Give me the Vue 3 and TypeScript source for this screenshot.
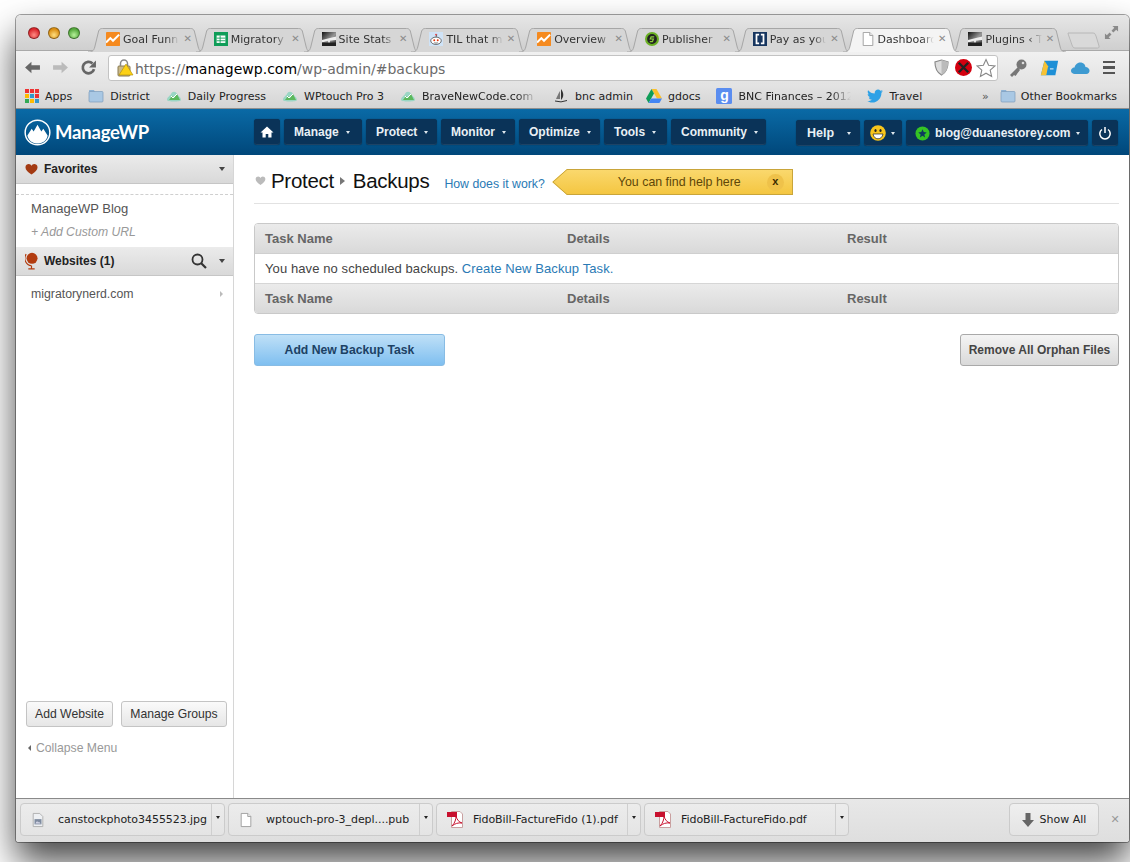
<script setup lang="ts">
const icons: Record<string, string> = {
  funnel: '<rect width="16" height="16" rx="1" fill="#f58a1f"/><path d="M0 12 L5 7 L8 10 L15 3" fill="none" stroke="#fff" stroke-width="2.4"/>',
  sheet: '<rect width="16" height="16" fill="#0f9d58"/><path d="M3 4h10v8.5H3z" fill="#fff"/><path d="M3 7h10M3 10h10M7 4v8.5" stroke="#0f9d58" stroke-width="1"/>',
  wp: '<defs><linearGradient id="sg" x1="0" y1="0" x2="1" y2="1"><stop offset="0" stop-color="#111"/><stop offset=".55" stop-color="#999"/><stop offset="1" stop-color="#222"/></linearGradient></defs><rect width="16" height="16" fill="url(#sg)"/><path d="M0 9 L16 5 V9 L9 10 V16 H7 V10 L0 12z" fill="#eee"/><rect y="12" width="16" height="4" fill="#222"/>',
  reddit: '<rect width="16" height="16" fill="#cfe3f7"/><ellipse cx="8" cy="10" rx="6" ry="4.2" fill="#fff" stroke="#333" stroke-width=".8"/><circle cx="8" cy="3" r="1" fill="#e33"/><path d="M8 6 L9 3" stroke="#333" stroke-width=".7"/><circle cx="6" cy="9.5" r="1.1" fill="#e4350c"/><circle cx="10" cy="9.5" r="1.1" fill="#e4350c"/><path d="M6 12.2q2 1 4 0" stroke="#333" stroke-width=".7" fill="none"/>',
  pub: '<circle cx="8" cy="8" r="8" fill="#6ab023"/><circle cx="8" cy="8" r="5.6" fill="#222"/><path d="M10.5 5.5H7L6 8h3.6L8.5 11H5.5" fill="none" stroke="#8ed13a" stroke-width="1.4"/>',
  pay: '<rect width="16" height="16" fill="#16355f"/><path d="M7 3H4v10h3M9 3h3v10H9" fill="none" stroke="#fff" stroke-width="2"/>',
  doc: '<path d="M2.5 .5H10L13.5 4V15.5H2.5z" fill="#fff" stroke="#999"/><path d="M10 .5V4H13.5" fill="#eee" stroke="#999"/>',
  jpg: '<path d="M2.5 .5H10L13.5 4V15.5H2.5z" fill="#eef0f3" stroke="#aaa"/><rect x="4" y="7" width="8" height="6" fill="#7f8ba0"/><path d="M5 12l2-3 1 2 1-1 2 2z" fill="#dde"/>',
  pdf: '<path d="M4.5 1.5H13L15.5 4V17.5H4.5z" fill="#fff" stroke="#c9a0a0"/><rect x="0" y="2" width="10" height="5" fill="#c8102e"/><path d="M5 16c3-3 4-7 4-10 1 4 3 6 6 7-4-.5-7 .5-10 3z" fill="none" stroke="#c8102e" stroke-width="1"/>',
  cloud: '<path d="M1 12 C1 9 4 8 5 6 C6 3 10 3 11 6 C12 8 15 9 15 12 C15 14 1 14 1 12z" fill="#9ad6c4"/><path d="M3 12 L6 8 L8 10 L11 6 L14 12z" fill="#5cb85c"/><path d="M5 8l2 2 4-4" stroke="#fff" stroke-width="1" fill="none"/>',
  folder: '<path d="M1 4 V2.5 Q1 2 1.5 2 H6 L7 4z" fill="#8fb3d4"/><rect x="1" y="3.5" width="14" height="10.5" rx="1" fill="#a9c8e4" stroke="#7c9cbb" stroke-width=".7"/>',
  sail: '<path d="M8 1 C11 5 11 9 8 12z" fill="#333"/><path d="M7 3 C5 6 4 9 3 11 L7 11z" fill="#777"/><path d="M2 13 Q8 15 14 12.5" stroke="#333" fill="none"/>',
  gdocs: '<path d="M5.5 1H10.5L16 10.5H11z" fill="#fbc02d"/><path d="M5.5 1L0 10.5L2.6 15L8 5.5z" fill="#0f9d58"/><path d="M2.6 15H13.4L16 10.5H5.2z" fill="#4285f4"/>',
  g: '<rect width="16" height="16" rx="1.5" fill="#5a8df0"/>',
  bird: '<path d="M16 3.2c-.6.3-1.2.4-1.9.5.7-.4 1.2-1 1.4-1.8-.6.4-1.3.6-2.1.8C12.800 2 12 1.600 11 1.600c-1.800 0-3.300 1.500-3.300 3.300 0 .3 0 .5.1.7C5.100 5.500 2.700 4.200 1.100 2.200.8 2.700.7 3.200.7 3.800c0 1.100.6 2.100 1.500 2.700-.5 0-1-.2-1.500-.4 0 1.600 1.100 2.900 2.600 3.200-.5.1-1 .2-1.500.1.4 1.300 1.600 2.300 3.100 2.300C3.700 12.600 2 13.300 0 13.100c1.500.9 3.200 1.500 5 1.500 6 0 9.400-5 9.400-9.400v-.4c.6-.5 1.200-1 1.600-1.600z" fill="#2da1e6"/>',
}

const tabs = [
  { title: 'Goal Funn', icon: 'funnel' },
  { title: 'Migratory', icon: 'sheet' },
  { title: 'Site Stats', icon: 'wp' },
  { title: 'TIL that m', icon: 'reddit' },
  { title: 'Overview', icon: 'funnel' },
  { title: 'Publisher', icon: 'pub' },
  { title: 'Pay as you', icon: 'pay' },
  { title: 'Dashboard', icon: 'doc', active: true },
  { title: 'Plugins ‹ T', icon: 'wp' },
]
const marks = [
  { title: 'District', icon: 'folder' },
  { title: 'Daily Progress', icon: 'cloud' },
  { title: 'WPtouch Pro 3', icon: 'cloud' },
  { title: 'BraveNewCode.com', icon: 'cloud', fade: true },
  { title: 'bnc admin', icon: 'sail' },
  { title: 'gdocs', icon: 'gdocs' },
  { title: 'BNC Finances – 2012', icon: 'g', fade: true, letter: true },
  { title: 'Travel', icon: 'bird' },
]
const menu = [
  { label: 'Manage', width: 78 },
  { label: 'Protect', width: 71 },
  { label: 'Monitor', width: 74 },
  { label: 'Optimize', width: 81 },
  { label: 'Tools', width: 63 },
  { label: 'Community', width: 95 },
]
const downloads = [
  { name: 'canstockphoto3455523.jpg', icon: 'jpg' },
  { name: 'wptouch-pro-3_depl....pub', icon: 'doc' },
  { name: 'FidoBill-FactureFido (1).pdf', icon: 'pdf' },
  { name: 'FidoBill-FactureFido.pdf', icon: 'pdf' },
]
</script>

<template>
  <div class="page">
    <div class="window">
      <div class="strip">
        <div class="lights"><i class="red"></i><i class="amber"></i><i class="green"></i></div>
        <div class="tabs">
          <div v-for="t in tabs" :key="t.title + t.icon" class="tab" :class="{ active: t.active }">
            <svg class="tab-bg" viewBox="0 0 120 24" preserveAspectRatio="none">
              <path d="M0 24 C4 24 6 23 7 19 L11 3 C12 1 13 .5 15 .5 H106 C108 .5 109 1 110 3 L114 19 C115 23 117 24 120 24" vector-effect="non-scaling-stroke" />
            </svg>
            <svg class="fav" viewBox="0 0 16 16" v-html="icons[t.icon]"></svg>
            <span class="tab-title">{{ t.title }}</span>
            <span class="tab-x">✕</span>
          </div>
          <svg class="newtab" viewBox="0 0 34 17"><path d="M1 1 H26 C28 1 28 2 29 4 L32 14 C32.500 16 31 16 30 16 H8 C6 16 6 15 5 13 L1.500 3 C1 1.500 1 1 1 1z" /></svg>
        </div>
        <svg class="expand" viewBox="0 0 16 16"><path d="M9 1h6v6l-2-2-3 3-2-2 3-3zM7 15H1V9l2 2 3-3 2 2-3 3z" fill="#8a8a8a"/></svg>
      </div>

      <div class="toolbar">
        <svg class="tool" viewBox="0 0 16 16"><path d="M1 8 L7 2.500 V5.800 H15 V10.200 H7 V13.500z" fill="#666"/></svg>
        <svg class="tool" viewBox="0 0 16 16"><path d="M15 8 L9 2.500 V5.800 H1 V10.200 H9 V13.500z" fill="#bbb"/></svg>
        <svg class="tool" viewBox="0 0 16 16"><path d="M13.200 9.500 A5.400 5.400 0 1 1 11.800 4.200" fill="none" stroke="#666" stroke-width="2.600"/><path d="M15 1.500V8H8.500z" fill="#666"/></svg>
        <div class="omni">
          <svg class="lock" viewBox="0 0 18 18"><rect x="2" y="7" width="12" height="10" rx="1" fill="#c9b98a" stroke="#8a7a50"/><path d="M4.500 7V4.500a3.500 3.500 0 0 1 7 0V7" fill="none" stroke="#888" stroke-width="1.500"/><path d="M10 5 L17 16 H3z" fill="#fcd116" stroke="#b08d00" stroke-width=".6"/></svg>
          <span class="url"><span class="dim">https://</span><b>managewp.com</b><span class="dim">/wp-admin/#backups</span></span>
          <svg class="om-i shield" viewBox="0 0 16 18"><path d="M8 1 L15 3 C15 10 13 14 8 17 C3 14 1 10 1 3z" fill="#ddd" stroke="#888" stroke-width="1.200"/><path d="M8 1 L15 3 C15 10 13 14 8 17z" fill="#bbb"/></svg>
          <svg class="om-i blocker" viewBox="0 0 18 18"><circle cx="9" cy="9" r="9" fill="#d4000f"/><path d="M4 4 L14 14 M14 4 L4 14" stroke="#222" stroke-width="2.500"/></svg>
          <svg class="om-i star" viewBox="0 0 20 20"><path d="M10 1.500 L12.600 7.300 L19 8 L14.200 12.200 L15.600 18.500 L10 15.200 L4.400 18.500 L5.800 12.200 L1 8 L7.400 7.300z" fill="#fff" stroke="#888" stroke-width="1.100"/></svg>
        </div>
        <svg class="ext key" viewBox="0 0 20 20"><circle cx="13.500" cy="6.500" r="5" fill="#777"/><path d="M10 9 L2 17 L4 19 L6 17 L7.500 18 L12 12z" fill="#777"/><circle cx="15" cy="5" r="1.300" fill="#ddd"/></svg>
        <svg class="ext" viewBox="0 0 22 20"><path d="M6 2 H21 L18 18 H2z" fill="#1d8fd6"/><path d="M6 2 L2 18 H8 L10 8z" fill="#f7c234"/><path d="M12 11h4" stroke="#fff"/></svg>
        <svg class="ext" viewBox="0 0 22 16"><path d="M5 14.500 C1.500 14.500 .5 11.500 1.500 9.500 C2.500 7.800 4 7.500 5 7.500 C6 3 9.500 1.500 12.500 2 C15.500 2.500 17 5 17 7 C19.500 7 21.500 9 21.500 11 C21.500 13 20 14.500 18 14.500z" fill="#3d9ad1"/></svg>
        <div class="burger"><i></i><i></i><i></i></div>
      </div>

      <div class="bookmarks">
        <div class="mark apps">
          <span class="dots"><i v-for="(c, n) in ['#e33','#e33','#e33','#fb0','#39c','#e33','#3a5','#fb0','#39c']" :key="n" :style="{ background: c }"></i></span>
          Apps
        </div>
        <div v-for="m in marks" :key="m.title" class="mark">
          <span v-if="m.letter" class="g-wrap">
            <svg viewBox="0 0 16 16" v-html="icons[m.icon]"></svg><em>g</em>
          </span>
          <svg v-else viewBox="0 0 16 16" v-html="icons[m.icon]"></svg>
          <span :class="{ fade: m.fade }">{{ m.title }}</span>
        </div>
        <div class="mark more">»</div>
        <div class="mark other"><svg viewBox="0 0 16 16" v-html="icons.folder"></svg>Other Bookmarks</div>
      </div>

      <div class="nav">
        <div class="logo">
          <svg viewBox="0 0 28 28"><circle cx="14" cy="14" r="12.800" fill="none" stroke="#fff" stroke-width="1.500"/><path d="M3.500 17 L8 10 L10 13 L14 6 L18 13 L20 10 L24.500 17 C24 22 19 25.500 14 25.500 C9 25.500 4.500 22 3.500 17z" fill="#fff"/></svg>
          <span>ManageWP</span>
        </div>
        <div class="menu">
          <div class="nb home"><svg viewBox="0 0 14 14"><path d="M7 1.500 L13.500 7.500 H11.500 V12.500 H8.300 V9 H5.700 V12.500 H2.500 V7.500 H.5z" fill="#fff"/></svg></div>
          <div v-for="m in menu" :key="m.label" class="nb" :style="{ width: m.width + 'px' }">{{ m.label }}<i class="caret"></i></div>
        </div>
        <div class="menu right">
          <div class="nb help">Help<i class="caret"></i></div>
          <div class="nb smile">
            <svg viewBox="0 0 16 16"><circle cx="8" cy="8" r="7.800" fill="#f8c51c"/><ellipse cx="5.500" cy="5.500" rx="1.100" ry="1.600" fill="#222"/><ellipse cx="10.500" cy="5.500" rx="1.100" ry="1.600" fill="#222"/><path d="M3 9 H13 C12.500 12 10.500 13.800 8 13.800 C5.500 13.800 3.500 12 3 9z" fill="#fff" stroke="#222" stroke-width=".7"/></svg>
            <i class="caret"></i>
          </div>
          <div class="nb user">
            <svg viewBox="0 0 16 16"><circle cx="8" cy="8" r="7.500" fill="#35c424"/><path d="M8 3.500 L9.300 6.500 L12.500 6.800 L10 9 L10.800 12.200 L8 10.500 L5.200 12.200 L6 9 L3.500 6.800 L6.700 6.500z" fill="#0d3b5e"/></svg>
            blog@duanestorey.com<i class="caret"></i>
          </div>
          <div class="nb power"><svg viewBox="0 0 14 14"><path d="M4 3.500 A5.200 5.200 0 1 0 10 3.500" fill="none" stroke="#fff" stroke-width="1.500"/><path d="M7 1 V7" stroke="#fff" stroke-width="1.500"/></svg></div>
        </div>
      </div>

      <div class="body">
        <aside class="side">
          <div class="side-head">
            <svg viewBox="0 0 14 12"><path d="M7 12 C3 9 .5 7 .5 4 C.5 1.500 2.500 .5 4 .5 C5.500 .5 6.500 1.500 7 2.500 C7.500 1.500 8.500 .5 10 .5 C11.500 .5 13.500 1.500 13.500 4 C13.500 7 11 9 7 12z" fill="#a33a12"/></svg>
            <span class="grow">Favorites</span>
            <i class="down"></i>
          </div>
          <div class="favs">
            <div class="fav-link">ManageWP Blog</div>
            <div class="add-url">+ Add Custom URL</div>
          </div>
          <div class="side-head sites">
            <svg viewBox="0 0 12 17"><circle cx="6.500" cy="6" r="5.200" fill="#b23c10"/><path d="M1 2 A7 7 0 0 0 6 13 M6 13 V15.500 M3 16 H9" fill="none" stroke="#b23c10" stroke-width="1.100"/></svg>
            <span class="grow">Websites (1)</span>
            <svg class="search" viewBox="0 0 16 16"><circle cx="6.500" cy="6.500" r="5" fill="none" stroke="#333" stroke-width="1.800"/><path d="M10 10 L15 15" stroke="#333" stroke-width="2.200"/></svg>
            <i class="down"></i>
          </div>
          <div class="site-row"><span>migratorynerd.com</span><i class="tri"></i></div>
          <div class="side-foot">
            <div class="side-btns"><button>Add Website</button><button>Manage Groups</button></div>
            <div class="collapse"><i class="back"></i>Collapse Menu</div>
          </div>
        </aside>

        <main class="main">
          <div class="title-row">
            <svg class="crumb-heart" viewBox="0 0 14 12"><path d="M7 12 C3 9 .5 7 .5 4 C.5 1.500 2.500 .5 4 .5 C5.500 .5 6.500 1.500 7 2.500 C7.500 1.500 8.500 .5 10 .5 C11.500 .5 13.500 1.500 13.500 4 C13.500 7 11 9 7 12z" fill="#bbb"/></svg>
            <h1>Protect<i class="crumb-tri"></i>Backups</h1>
            <a class="how">How does it work?</a>
            <div class="hint">
              <svg class="hint-point" viewBox="0 0 16 26">
                <defs><linearGradient id="hg" x1="0" y1="0" x2="0" y2="1"><stop offset="0" stop-color="#fad86d"/><stop offset="1" stop-color="#f4c641"/></linearGradient></defs>
                <path d="M16 0 H15 L0 13 L15 26 H16z" fill="url(#hg)"/>
                <path d="M16 .5 H15 L1 13 L15 25.500 H16" fill="none" stroke="#c9a53a"/>
              </svg>
              <div class="hint-body"><span>You can find help here</span><b>x</b></div>
            </div>
          </div>
          <div class="grid">
            <div class="g-row head"><span>Task Name</span><span>Details</span><span>Result</span></div>
            <div class="g-empty">You have no scheduled backups. <a>Create New Backup Task.</a></div>
            <div class="g-row head foot"><span>Task Name</span><span>Details</span><span>Result</span></div>
          </div>
          <div class="actions">
            <button class="primary">Add New Backup Task</button>
            <button class="orphan">Remove All Orphan Files</button>
          </div>
        </main>
      </div>

      <div class="dl">
        <div v-for="d in downloads" :key="d.name" class="dl-item">
          <div class="dl-main">
            <svg :class="d.icon === 'pdf' ? 'pdf' : ''" :viewBox="d.icon === 'pdf' ? '0 0 16 19' : '0 0 16 16'" v-html="icons[d.icon]"></svg>
            <span>{{ d.name }}</span>
          </div>
          <div class="dl-arrow"><i></i></div>
        </div>
        <div class="dl-space"></div>
        <div class="show-all">
          <svg viewBox="0 0 12 14"><path d="M3.500 0 H8.500 V7 H12 L6 14 L0 7 H3.500z" fill="#666"/></svg>
          Show All
        </div>
        <span class="dl-x">✕</span>
      </div>
    </div>
  </div>
</template>

<style>
html, body { margin: 0; background: #fff; }
</style>

<style scoped>
.page {
  width: 1130px;
  height: 862px;
  box-sizing: border-box;
  padding: 15px 1px 0 16px;
  overflow: hidden;
  background: #fff;
}
.window {
  height: 827px;
  display: flex;
  flex-direction: column;
  border-radius: 5px 5px 3px 3px;
  box-shadow: 0 20px 36px rgba(0, 0, 0, .72), 0 0 0 1px rgba(90, 90, 90, .55);
  background: #fff;
  font-family: "Liberation Sans", Arial, sans-serif;
}
.strip {
  height: 36px;
  flex: none;
  display: flex;
  align-items: flex-start;
  background: linear-gradient(#e6e6e6, #cfcfcf);
  border-radius: 5px 5px 0 0;
  border-bottom: 1px solid #a9a9a9;
  box-sizing: border-box;
}
.lights { display: flex; gap: 8px; padding: 12px 0 0 12px; width: 63px; flex: none; }
.lights i { width: 12px; height: 12px; border-radius: 50%; border: .5px solid rgba(0,0,0,.35); box-sizing: border-box; }
.red { background: radial-gradient(circle at 50% 70%, #ff8d85, #d8242a 70%); }
.amber { background: radial-gradient(circle at 50% 70%, #ffdf80, #d98c10 70%); }
.green { background: radial-gradient(circle at 50% 70%, #b7f29b, #52a63a 70%); }
.tabs { display: flex; align-items: flex-end; height: 36px; padding-left: 1px; }
.tab {
  position: relative;
  width: 107.800px;
  height: 24px;
  display: flex;
  align-items: center;
  box-sizing: border-box;
  padding: 0 8px 2px 14px;
  margin-bottom: -1px;
  font: 11px/1 "DejaVu Sans", sans-serif;
  color: #333;
}
.tab-bg { position: absolute; left: -4px; top: 0; width: 116px; height: 24px; fill: #d6d6d6; stroke: #a6a6a6; stroke-width: 1px; z-index: 0; }
.tab.active { z-index: 2; }
.tab.active .tab-bg { fill: #f4f4f4; }
.fav { width: 14px; height: 14px; flex: none; position: relative; margin-right: 3px; }
.tab-title {
  position: relative;
  flex: 1;
  overflow: hidden;
  white-space: nowrap;
  -webkit-mask-image: linear-gradient(to right, #000 78%, transparent 100%);
  mask-image: linear-gradient(to right, #000 78%, transparent 100%);
}
.tab-x { position: relative; color: #8b8b8b; font-size: 10px; margin-left: 4px; }
.newtab { width: 34px; height: 17px; margin: 0 0 2px 5px; fill: #d9d9d9; stroke: #aaa; stroke-width: .7; flex: none; }
.expand { width: 15px; height: 15px; margin: 10px 0 0 3px; flex: none; }
.toolbar {
  height: 33px;
  flex: none;
  display: flex;
  align-items: center;
  box-sizing: border-box;
  padding: 0 11px 0 8px;
  background: linear-gradient(#f1f1f1, #e3e3e3);
}
.tool { width: 17px; height: 17px; margin-right: 11px; flex: none; }
.omni {
  width: 890px;
  height: 26px;
  flex: none;
  display: flex;
  align-items: center;
  box-sizing: border-box;
  padding: 0 1px 0 7px;
  background: #fff;
  border: 1px solid #c3c3c3;
  border-radius: 3px;
}
.lock { width: 18px; height: 18px; margin-right: 1px; flex: none; }
.url { flex: 1; font: 14px/18px "DejaVu Sans", sans-serif; color: #111; white-space: nowrap; padding-top: 3px; }
.url b { font-weight: 400; color: #000; }
.dim { color: #6b6b6b; }
.om-i { flex: none; }
.shield { width: 15px; height: 17px; margin-right: 6px; }
.blocker { width: 17px; height: 17px; margin-right: 4px; }
.star { width: 20px; height: 20px; }
.ext { width: 20px; height: 20px; flex: none; margin-left: 11px; }
.key { margin-left: 10px; }
.burger { display: flex; flex-direction: column; gap: 3px; width: 12px; margin-left: 13px; flex: none; }
.burger i { height: 2.500px; background: #555; display: block; }

.bookmarks {
  height: 25px;
  flex: none;
  display: flex;
  align-items: center;
  box-sizing: border-box;
  padding: 0 12px 0 9px;
  background: linear-gradient(#e4e4e4, #d4d4d4);
  border-bottom: 1px solid #8f8f8f;
  font: 11px "DejaVu Sans", sans-serif;
  color: #222;
}
.mark { display: flex; align-items: center; gap: 6px; margin-right: 16px; white-space: nowrap; }
.mark svg { width: 16px; height: 16px; flex: none; }
.mark:nth-child(6) { margin-right: 13px; }
.apps { margin-right: 16px; }
.dots { display: grid; grid-template-columns: repeat(3, 4px); gap: 1px; width: 14px; }
.dots i { height: 4px; display: block; }
.fade {
  display: inline-block;
  overflow: hidden;
  -webkit-mask-image: linear-gradient(to right, #000 82%, transparent 100%);
  mask-image: linear-gradient(to right, #000 82%, transparent 100%);
}
.mark:nth-child(5) .fade { width: 115px; }
.mark:nth-child(8) .fade { width: 113px; }
.g-wrap { position: relative; width: 16px; height: 16px; display: block; }
.g-wrap em { position: absolute; inset: 0; color: #fff; font: 700 14px/14px "Liberation Sans", sans-serif; text-align: center; }
.more { margin: 0 11px 0 auto; font-size: 11px; color: #555; }
.other { margin-right: 0; gap: 5px; }

.nav {
  height: 46px;
  flex: none;
  display: flex;
  align-items: flex-start;
  box-sizing: border-box;
  padding: 10px 11px 0 8px;
  background: linear-gradient(#0a6aa6, #00477a);
}
.logo { width: 230px; display: flex; align-items: center; gap: 4px; height: 26px; flex: none; color: #fff; font: 700 18.500px "Lato", "Liberation Sans", sans-serif; letter-spacing: -.2px; }
.logo svg { width: 27px; height: 27px; flex: none; }
.menu { display: flex; gap: 4px; }
.right { margin-left: auto; padding-top: 1px; }
.nb {
  height: 26px;
  box-sizing: border-box;
  padding: 0 0 0 10px;
  display: flex;
  align-items: center;
  background: #0a3358;
  border-radius: 3px;
  box-shadow: inset 0 -1px 0 rgba(255,255,255,.08), 0 0 1px rgba(0,0,0,.5);
  color: #e9f0f5;
  font: 700 12px "Liberation Sans", sans-serif;
  white-space: nowrap;
}
.home { width: 26px; padding: 0; justify-content: center; }
.home svg { width: 14px; height: 14px; }
.caret { width: 0; height: 0; border: 2.500px solid transparent; border-top: 3px solid #dfe8ee; border-bottom: 0; margin-left: 7px; flex: none; }
.help { width: 64px; padding: 0 9px 0 11px; justify-content: space-between; font-size: 12.500px; }
.smile { width: 38px; padding: 0 0 0 6px; }
.smile svg { width: 16px; height: 16px; flex: none; }
.smile .caret { margin-left: 5px; }
.user { width: 182px; padding: 0 0 0 9px; gap: 5px; }
.user svg { width: 15px; height: 15px; flex: none; }
.user .caret { margin-left: 0; }
.power { width: 26px; padding: 0; justify-content: center; }
.power svg { width: 14px; height: 14px; }

.body { flex: 1; display: flex; min-height: 0; }
.side {
  width: 218px;
  flex: none;
  box-sizing: border-box;
  border-right: 1px solid #d6d6d6;
  display: flex;
  flex-direction: column;
  font-size: 12px;
  color: #555;
}
.side-head {
  height: 29px;
  flex: none;
  display: flex;
  align-items: center;
  box-sizing: border-box;
  padding: 0 8px 0 9px;
  gap: 6px;
  background: linear-gradient(#ebebeb, #d9d9d9);
  border-bottom: 1px solid #c6c6c6;
  color: #222;
  font-weight: 700;
}
.side-head > svg:first-child { width: 13px; height: 12px; flex: none; }
.sites > svg:first-child { width: 13px; height: 18px; }
.grow { flex: 1; }
.down { width: 0; height: 0; border: 3.500px solid transparent; border-top: 4px solid #444; border-bottom: 0; }
.search { width: 16px; height: 16px; margin-right: 6px; }
.favs { border-top: 1px dashed #cfcfcf; margin-top: 10px; padding: 5px 15px 6px; }
.fav-link { font-size: 13px; line-height: 18px; }
.add-url { font-size: 12.200px; font-style: italic; color: #999; line-height: 18px; margin-top: 5px; }
.site-row { display: flex; align-items: center; justify-content: space-between; padding: 9px 10px 0 15px; font-size: 12.300px; line-height: 18px; }
.tri { width: 0; height: 0; border: 3px solid transparent; border-left: 3px solid #bbb; border-right: 0; }
.side-foot { margin-top: auto; padding: 0 6px 42px 10px; }
.side-btns { display: flex; justify-content: space-between; }
.side-btns button {
  height: 26px;
  padding: 0;
  width: 87px;
  border: 1px solid #c4c4c4;
  border-radius: 3px;
  background: linear-gradient(#fafafa, #e6e6e6);
  font: 12.200px "Liberation Sans", sans-serif;
  color: #333;
}
.side-btns button:last-child { width: 106px; }
.collapse { margin-top: 13px; color: #999; font-size: 12.200px; display: flex; align-items: center; gap: 5px; line-height: 16px; padding-left: 2px; }
.back { width: 0; height: 0; border: 3px solid transparent; border-right: 3px solid #666; border-left: 0; }

.main { flex: 1; box-sizing: border-box; padding: 0 10px 0 20px; min-width: 0; }
.title-row { height: 49px; display: flex; align-items: center; border-bottom: 1px solid #e2e2e2; padding-top: 6px; box-sizing: border-box; }
.crumb-heart { width: 11px; height: 9px; margin: -4px 5px 0 1px; flex: none; }
h1 { margin: -2px 0 0; font: 400 20.500px "Liberation Sans", sans-serif; color: #111; display: flex; align-items: center; letter-spacing: -.3px; }
.crumb-tri { width: 0; height: 0; border: 4.500px solid transparent; border-left: 5px solid #777; border-right: 0; margin: 0 8px 0 6px; }
.how { font-size: 12.300px; color: #2a7ab5; margin: 3px 0 0 15px; }
.hint { display: flex; margin-left: 7px; height: 26px; }
.hint-point { width: 16px; height: 26px; display: block; flex: none; }
.hint-body {
  width: 225px;
  box-sizing: border-box;
  display: flex;
  align-items: center;
  justify-content: space-between;
  padding: 0 8px 0 50px;
  background: linear-gradient(#fad86d, #f4c641);
  border: 1px solid #c9a53a;
  border-left: 0;
  font: 12.400px "Liberation Sans", sans-serif;
  color: #5e4708;
}
.hint-body b { width: 17px; height: 17px; border-radius: 50%; background: #efc24a; color: #3a2a00; text-align: center; line-height: 15px; font-size: 11px; }
.grid { margin-top: 19px; border: 1px solid #c9c9c9; border-radius: 4px; overflow: hidden; }
.g-row {
  height: 30px;
  display: grid;
  grid-template-columns: 302px 280px 1fr;
  align-items: center;
  box-sizing: border-box;
  padding-left: 10px;
  background: linear-gradient(#ebebeb, #d9d9d9);
  color: #666;
  font-size: 13px;
  font-weight: 700;
  border-bottom: 1px solid #cfcfcf;
}
.foot { border-top: 1px solid #d6d6d6; border-bottom: 0; }
.g-empty { height: 29px; box-sizing: border-box; padding-left: 10px; display: flex; align-items: center; gap: 3.500px; font-size: 13px; letter-spacing: .1px; color: #444; background: #fff; }
.g-empty a { color: #2a7ab5; }
.actions { margin-top: 20px; display: flex; justify-content: space-between; }
.actions button { height: 32px; border-radius: 3px; font: 700 12px "Liberation Sans", sans-serif; padding: 0; }
.actions .primary { width: 191px; font-size: 12.200px; background: linear-gradient(#bfe0f7, #7fbff0); border: 1px solid #88bce4; color: #1c4164; }
.orphan { width: 159px; background: linear-gradient(#f4f4f4, #d9d9d9); border: 1px solid #a9a9a9; color: #444; }

.dl {
  height: 44px;
  flex: none;
  display: flex;
  align-items: center;
  box-sizing: border-box;
  padding: 0 7px 2px 4px;
  gap: 3px;
  background: linear-gradient(#e8e8e8, #dedede);
  border-top: 1px solid #8a8a8a;
  border-radius: 0 0 3px 3px;
  font: 11px "DejaVu Sans", sans-serif;
  color: #222;
}
.dl-item {
  width: 205px;
  height: 33px;
  display: flex;
  box-sizing: border-box;
  border: 1px solid #cbcbcb;
  border-radius: 4px;
  background: linear-gradient(#ececec, #e4e4e4);
}
.dl-main { flex: 1; display: flex; align-items: center; padding-left: 10px; white-space: nowrap; overflow: hidden; letter-spacing: -.05px; }
.dl-main svg { width: 14px; height: 16px; flex: none; margin-right: 13px; }
.dl-main svg.pdf { width: 16px; height: 19px; margin-right: 10px; }
.dl-arrow { width: 13px; flex: none; border-left: 1px solid #cfcfcf; display: flex; justify-content: center; padding-top: 12px; box-sizing: border-box; }
.dl-arrow i { display: block; width: 0; height: 0; border: 2.500px solid transparent; border-top: 3px solid #222; border-bottom: 0; }
.dl-space { flex: 1; }
.show-all {
  width: 90px;
  height: 33px;
  box-sizing: border-box;
  display: flex;
  align-items: center;
  justify-content: center;
  gap: 6px;
  border: 1px solid #cbcbcb;
  border-radius: 4px;
  background: linear-gradient(#efefef, #e4e4e4);
}
.show-all svg { width: 12px; height: 14px; }
.dl-x { width: 14px; margin-left: 6px; color: #999; font-size: 11px; text-align: center; }
</style>
